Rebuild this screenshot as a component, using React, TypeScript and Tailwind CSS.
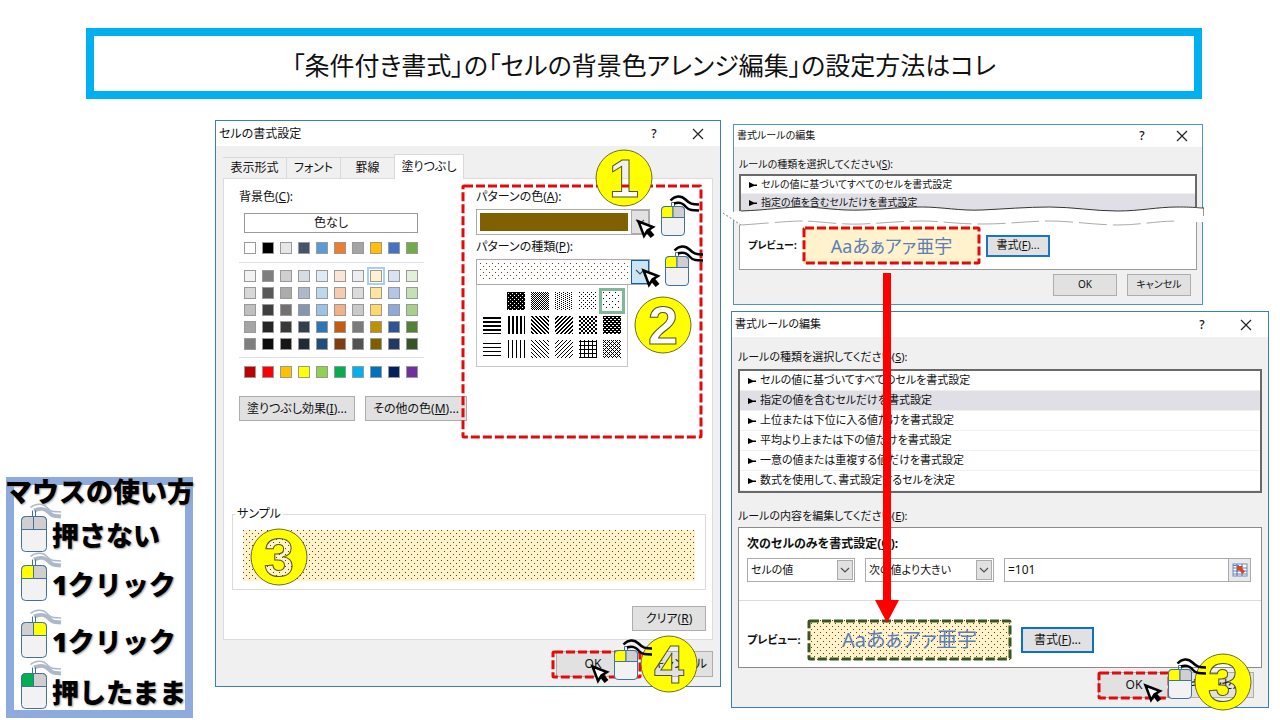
import { useId } from "react";
import type { ReactNode } from "react";

const THEME_ROW = ["#ffffff", "#000000", "#e7e6e6", "#44546a", "#5b9bd5", "#ed7d31", "#a5a5a5", "#ffc000", "#4472c4", "#70ad47"];

const TINT_ROWS = [
  ["#f2f2f2", "#7f7f7f", "#d0cece", "#d6dce4", "#deebf6", "#fbe5d5", "#ededed", "#fff2cc", "#d9e2f3", "#e2efd9"],
  ["#d8d8d8", "#595959", "#aeabab", "#adb9ca", "#bdd7ee", "#f7cbac", "#dbdbdb", "#fee599", "#b4c6e7", "#c5e0b3"],
  ["#bfbfbf", "#3f3f3f", "#757070", "#8496b0", "#9cc3e5", "#f4b183", "#c9c9c9", "#ffd965", "#8eaadb", "#a8d08d"],
  ["#a5a5a5", "#262626", "#3a3838", "#323f4f", "#2e75b5", "#c55a11", "#7b7b7b", "#bf9000", "#2f5496", "#538135"],
  ["#7f7f7f", "#0c0c0c", "#171616", "#222a35", "#1e4e79", "#833c0b", "#525252", "#7f6000", "#1f3864", "#375623"],
];

const STANDARD_ROW = ["#c00000", "#ff0000", "#ffc000", "#ffff00", "#92d050", "#00b050", "#00b0f0", "#0070c0", "#002060", "#7030a0"];

// one tile per hatch, "#" is an inked pixel
const DOTS = ["#.....", "......", "......", "...#..", "......", "......"];

const HATCHES: (string[] | null)[] = [
  null,
  ["####", "#.##", "####", "###."],
  ["#.", ".#"],
  ["#...", "..#."],
  ["#...", "....", "..#.", "...."],
  DOTS,
  ["....", "####", "####", "...."],
  [".##."],
  ["##..", ".##.", "..##", "#..#"],
  ["..##", ".##.", "##..", "#..#"],
  ["##..", "##..", "..##", "..##"],
  ["####", "#..#", "####", ".##."],
  ["....", "....", "....", "####"],
  [".#.."],
  ["#...", ".#..", "..#.", "...#"],
  ["...#", "..#.", ".#..", "#..."],
  [".#..", "####", ".#..", ".#.."],
  ["#.#.", ".#..", "#.#.", "...#"],
];

const RULES = [
  "セルの値に基づいてすべてのセルを書式設定",
  "指定の値を含むセルだけを書式設定",
  "上位または下位に入る値だけを書式設定",
  "平均より上または下の値だけを書式設定",
  "一意の値または重複する値だけを書式設定",
  "数式を使用して、書式設定するセルを決定",
];

function Hatch({ tile, ink = "#000", className }: { tile: string[]; ink?: string; className: string }) {
  const id = useId();
  return (
    <svg className={className} aria-hidden="true" shapeRendering="crispEdges">
      <defs>
        <pattern id={id} width={tile[0].length} height={tile.length} patternUnits="userSpaceOnUse">
          {tile.map((row, y) =>
            [...row].map((c, x) => (c === "#" ? <rect key={`${x}-${y}`} x={x} y={y} width="1" height="1" fill={ink} /> : null))
          )}
        </pattern>
      </defs>
      <rect width="100%" height="100%" fill={`url(#${id})`} />
    </svg>
  );
}

function DashedFrame({ color = "#e00b0b" }: { color?: string }) {
  return (
    <svg className="pointer-events-none absolute inset-px h-[calc(100%-2px)] w-[calc(100%-2px)] overflow-visible" aria-hidden="true">
      <rect width="100%" height="100%" rx="1" fill="none" stroke={color} strokeWidth="3" strokeDasharray="9 3" />
    </svg>
  );
}

// yellow disc with the digit cut out of it
function StepBadge({ n, className }: { n: number; className: string }) {
  const id = useId();
  return (
    <svg className={`pointer-events-none absolute h-[58px] w-[58px] ${className}`} viewBox="0 0 58 58" role="img" aria-label={`${n}`}>
      <defs>
        <text id={`${id}d`} x="29" y="48" textAnchor="middle" fontSize="54" fontWeight="700" fontFamily="Liberation Sans, sans-serif">
          {n}
        </text>
        <mask id={`${id}m`}>
          <rect width="58" height="58" fill="#fff" />
          <use href={`#${id}d`} fill="#000" />
        </mask>
      </defs>
      <circle cx="29" cy="29" r="28" fill="#ffff00" stroke="#6b6b2a" mask={`url(#${id}m)`} />
      <use href={`#${id}d`} fill="none" stroke="#55551e" />
    </svg>
  );
}

function ClickMouse({ className }: { className: string }) {
  return (
    <svg className={`pointer-events-none absolute h-[44px] w-[42px] ${className}`} viewBox="0 0 42 44" fill="none" aria-hidden="true">
      <path d="M11.500 12V8.500h3V12" stroke="#41719c" />
      <rect x="1.500" y="12.500" width="23" height="29" rx="3.500" fill="#f2f2f2" stroke="#41719c" />
      <path d="M1.500 23.500V16a3.500 3.500 0 0 1 3.500-3.500h8v11z" fill="#ffff00" stroke="#41719c" />
      <path d="M24.500 23.500V16a3.500 3.500 0 0 0-3.500-3.500h-8v11z" fill="#d0cece" stroke="#41719c" />
      <path d="M10.500 6.500C15 1.500 21 1 25.500 5.500s6.500 5 13.500 5" stroke="#000" strokeWidth="2.500" />
      <path d="M14 9.500c6-2 9 0 12 3.500s7 3.500 13 3.500" stroke="#000" strokeWidth="2.500" />
    </svg>
  );
}

function LegendMouse({ left = "#d0cece", right = "#d0cece" }: { left?: string; right?: string }) {
  return (
    <svg className="h-[49px] w-[42px] shrink-0" viewBox="0 0 42 49" fill="none" aria-hidden="true">
      <path d="M10.500 4.500C15 .5 23 0 27 4.500s5 4 14 4.500" stroke="#adb9ca" strokeWidth="1.500" />
      <path d="M14 7.500c7-3 11-2 15 2s6 3.500 12 4" stroke="#adb9ca" strokeWidth="4" />
      <path d="M12.500 13V7.500M15.500 13V7.500" stroke="#41719c" />
      <rect x="1.500" y="13.500" width="25" height="35" rx="4" fill="#f2f2f2" stroke="#41719c" />
      <path d="M1.500 26.500v-9a4 4 0 0 1 4-4h8v13z" fill={left} stroke="#41719c" />
      <path d="M26.500 26.500v-9a4 4 0 0 0-4-4h-9v13z" fill={right} stroke="#41719c" />
    </svg>
  );
}

function Pointer({ className }: { className: string }) {
  return (
    <svg className={`pointer-events-none absolute h-5 w-5 ${className}`} viewBox="0 0 20 20" aria-hidden="true">
      <path d="M12 12l4.500 5.500" stroke="#000" strokeWidth="5" />
      <path d="M2.500 2.500L17 8l-5.500 3.500L8 17z" fill="#fff" stroke="#000" strokeWidth="2.500" />
    </svg>
  );
}

function Chevron() {
  return (
    <svg className="h-2 w-2.5" viewBox="0 0 10 8" fill="none" stroke="#505050" strokeWidth="1.200" aria-hidden="true">
      <path d="M1 2l4 4 4-4" />
    </svg>
  );
}

function TitleBar({ title, className, buttonClass = "w-11" }: { title: string; className: string; buttonClass?: string }) {
  return (
    <div className={`flex items-center bg-white pl-[3px] ${className}`}>
      <h2 className="flex-1">{title}</h2>
      <button type="button" className={`text-center text-xs font-medium ${buttonClass}`}>?</button>
      <button type="button" aria-label="閉じる" className={`flex justify-center ${buttonClass}`}>
        <svg className="h-3 w-3" viewBox="0 0 12 12" stroke="#222" strokeWidth="1.200" aria-hidden="true">
          <path d="M1 1l10 10M11 1L1 11" />
        </svg>
      </button>
    </div>
  );
}

function PushButton({ children, className = "" }: { children: ReactNode; className?: string }) {
  return (
    <button type="button" className={`flex items-center justify-center border border-[#adadad] bg-[#e1e1e1] whitespace-nowrap ${className}`}>
      {children}
    </button>
  );
}

function Swatches({ colors, selected }: { colors: string[]; selected?: number }) {
  return (
    <div className="flex gap-1.5">
      {colors.map((c, i) => (
        <button
          key={c}
          type="button"
          aria-label={c}
          className={`h-3 w-3 border border-[#999] ${i === selected ? "outline-2 outline-offset-1 outline-[#a6d0f0]" : ""}`}
          style={{ backgroundColor: c }}
        />
      ))}
    </div>
  );
}

function PatternCombo({ label, accel, open, children }: { label: string; accel: string; open?: boolean; children: ReactNode }) {
  return (
    <div>
      <p id={`pattern-${accel}`} className="h-4 leading-4">
        {label}(<u>{accel}</u>):
      </p>
      <button
        type="button"
        aria-haspopup="listbox"
        aria-labelledby={`pattern-${accel}`}
        className="mt-1 flex h-[26px] w-[174px] border border-[#ababab] bg-white"
      >
        <span className="h-full flex-1 p-[3px]">{children}</span>
        <span className={`flex h-full w-[18px] items-center justify-center border ${open ? "border-[#0f5fa8] bg-[#cce4f7]" : "border-[#ababab] bg-[#e1e1e1]"}`}>
          <Chevron />
        </span>
      </button>
    </div>
  );
}

function FormatCells() {
  return (
    <section className="relative border border-[#3c7fb1] bg-[#f0f0f0]">
      <TitleBar title="セルの書式設定" className="h-[25px]" />

      <div className="px-[7px] pt-2 pb-2">
        <div role="tablist" className="flex items-end">
          <button role="tab" type="button" className="h-[21px] w-16 border-t border-r border-[#d9d9d9]">表示形式</button>
          <button role="tab" type="button" className="h-[21px] w-[54px] border-t border-r border-[#d9d9d9]">フォント</button>
          <button role="tab" type="button" className="h-[21px] w-[53px] border-t border-[#d9d9d9]">罫線</button>
          <button role="tab" type="button" aria-selected="true" className="relative -mb-px h-[25px] w-[70px] border border-b-0 border-[#d9d9d9] bg-white">塗りつぶし</button>
        </div>

        <div className="border border-[#dcdcdc] bg-white pt-1.5 pr-1.5 pb-2 pl-2">
          <div className="flex h-[253px]">
            <div className="min-w-0 flex-1 pt-1 pl-[7px]">
              <p className="h-4 leading-4">背景色(<u>C</u>):</p>
              <button type="button" className="mt-2 ml-[5px] block h-5 w-[174px] border border-[#999] bg-white">色なし</button>
              <div className="mt-[9px] w-[185px]">
                <div className="pl-[5px]"><Swatches colors={THEME_ROW} /></div>
                <div className="mt-2 flex flex-col gap-[5px] border-y border-[#dcdfe3] py-[7px] pl-[5px]">
                  {TINT_ROWS.map((row, i) => (
                    <Swatches key={row[0]} colors={row} selected={i === 0 ? 7 : undefined} />
                  ))}
                </div>
                <div className="mt-2 pl-[5px]"><Swatches colors={STANDARD_ROW} /></div>
              </div>
              <div className="mt-[18px] flex gap-2.5">
                <PushButton className="h-[25px] w-[116px] shrink-0">塗りつぶし効果(<u>I</u>)...</PushButton>
                <PushButton className="h-[25px] w-[102px] shrink-0">その他の色(<u>M</u>)...</PushButton>
              </div>
            </div>

            <div className="relative mr-1 w-[240px] shrink-0 px-3.5 pt-1">
              <PatternCombo label="パターンの色" accel="A">
                <span className="block h-full bg-[#806000]" />
              </PatternCombo>
              <div className="mt-1">
                <PatternCombo label="パターンの種類" accel="P" open>
                  <Hatch tile={DOTS} ink="#5f4a10" className="block h-full w-full" />
                </PatternCombo>
              </div>
              <div role="listbox" className="grid w-[152px] grid-cols-6 gap-1.5 border border-t-0 border-[#c6c6c6] bg-white px-1.5 pt-[7px] pb-2">
                {HATCHES.map((tile, i) => (
                  <span key={i} role="option" aria-selected={i === 5} className={`block h-[18px] w-[18px] ${i === 5 ? "outline-3 outline-offset-1 outline-[#7fb79a]" : ""}`}>
                    {tile && <Hatch tile={tile} className="block h-full w-full" />}
                  </span>
                ))}
              </div>
              <DashedFrame />
            </div>
          </div>

          <fieldset className="mt-[68px] h-[84px] border border-[#d9dcdc] px-2.5 pt-2">
            <legend className="-ml-2 h-4 px-0.5 leading-4">サンプル</legend>
            <Hatch tile={DOTS} ink="#5f4700" className="block h-[51px] w-full bg-[#fff2cc]" />
          </fieldset>
          <div className="mt-4 flex justify-end">
            <PushButton className="h-[25px] w-[74px]">クリア(<u>R</u>)</PushButton>
          </div>
        </div>

        <div className="mt-[11px] flex justify-end gap-1.5">
          <div className="relative h-[27px] w-[89px] pl-1">
            <PushButton className="h-[26px] w-[74px]">OK</PushButton>
            <DashedFrame />
          </div>
          <PushButton className="h-[26px] w-[66px]">キャンセル</PushButton>
        </div>
      </div>

      <StepBadge n={1} className="top-7 right-[67px]" />
      <StepBadge n={2} className="top-[175px] right-7" />
      <StepBadge n={3} className="top-[407px] left-[34px]" />
      <StepBadge n={4} className="top-[514px] right-[22px]" />
      <ClickMouse className="top-[73px] right-[18px]" />
      <ClickMouse className="top-[123px] right-[14px]" />
      <ClickMouse className="top-[517px] right-[65px]" />
      <Pointer className="top-[98px] right-16" />
      <Pointer className="top-[147px] right-[59px]" />
      <Pointer className="top-[543px] right-[110px]" />
    </section>
  );
}

function RuleList({ rules, rowClass }: { rules: string[]; rowClass: string }) {
  return (
    <ul role="listbox" className="border-2 border-[#696969] bg-white">
      {rules.map((r, i) => (
        <li key={r} role="option" aria-selected={i === 1} className={`flex items-center gap-1 border-b border-[#f0f0f0] pl-2 ${rowClass} ${i === 1 ? "bg-[#e0dfe5]" : ""}`}>
          <svg className="h-2 w-2" viewBox="0 0 8 8" aria-hidden="true">
            <path d="M0 1l5 2.500h3v1.500H5L0 7z" fill="#000" />
          </svg>
          {r}
        </li>
      ))}
    </ul>
  );
}

function TornEdge() {
  return (
    <svg className="absolute top-[81px] -right-0.5 -left-[11px] h-5 w-[calc(100%+13px)]" viewBox="0 0 483 20" preserveAspectRatio="none" fill="none" aria-hidden="true">
      <path
        d="M0 7L18 5C45 4 62 1 80 1s35 4 60 3 40-3 60-3 38 4 60 3 45-3 68-3 45 4 68 4 40-4 60-4 20 1 27 1v14c-8 0-16 0-27 0-20 0-38 4-60 4s-45-4-68-4-40 4-68 4-40-3-60-3-38 3-60 2-45-3-60-3-45 3-62 4z"
        fill="#fff"
      />
      <path d="M18 5C45 4 62 1 80 1s35 4 60 3 40-3 60-3 38 4 60 3 45-3 68-3 45 4 68 4 40-4 60-4 20 1 27 1v8" stroke="#333" strokeWidth="1" />
      <path d="M0 7l18 12" stroke="#777" strokeDasharray="2 2" />
      <path d="M18 19c17-1 47-4 62-4s38 4 60 3 40-3 60-3 32 3 60 3 46-3 68-3 46 4 68 4 40-4 60-4" stroke="#aaa" strokeWidth="1" strokeDasharray="28 6" />
    </svg>
  );
}

function RuleEditorBefore() {
  return (
    <section className="relative mt-1 mr-[66px] ml-0.5 border border-[#4f93c4] bg-[#f0f0f0] text-[10px]">
      <TitleBar title="書式ルールの編集" className="h-[22px]" buttonClass="w-10" />
      <div className="px-[5px] pb-2">
        <p className="pt-2 leading-[19px]">ルールの種類を選択してください(<u>S</u>):</p>
        <RuleList rules={RULES.slice(0, 2)} rowClass="h-[18px]" />
        <div className="flex h-14 items-center border border-t-0 border-[#999] bg-white pt-2 pl-2">
          <span className="w-[55px] font-bold whitespace-nowrap">プレビュー:</span>
          <div className="relative flex h-[37px] w-[177px] items-center justify-center bg-[#fff2cc] text-lg text-[#5b7fb5]">
            Aaあぁアァ亜宇
            <DashedFrame />
          </div>
          <button type="button" className="ml-1.5 h-[22px] w-16 border-2 border-[#1a74c8] bg-[#e1e1e1] text-[11px] whitespace-nowrap">書式(<u>F</u>)...</button>
        </div>
        <div className="mt-1 flex justify-end gap-2.5 pr-1.5">
          <PushButton className="h-[22px] w-16">OK</PushButton>
          <PushButton className="h-[22px] w-16">キャンセル</PushButton>
        </div>
      </div>
      <TornEdge />
    </section>
  );
}

function ArrowSelect({ label, value, className }: { label: string; value: string; className: string }) {
  return (
    <div className={`relative h-6 ${className}`}>
      <select aria-label={label} className="h-full w-full appearance-none border border-[#ababab] bg-white pl-[3px]">
        <option>{value}</option>
      </select>
      <span className="pointer-events-none absolute top-0.5 right-0.5 bottom-0.5 flex w-4 items-center justify-center border border-[#ababab] bg-[#e1e1e1]">
        <Chevron />
      </span>
    </div>
  );
}

function RuleEditorAfter() {
  return (
    <section className="relative mt-1.5 border border-[#3c7fb1] bg-[#f0f0f0] text-[11px]">
      <TitleBar title="書式ルールの編集" className="h-[25px]" />
      <div className="px-1.5 pb-2">
        <p className="pt-2 leading-6">ルールの種類を選択してください(<u>S</u>):</p>
        <RuleList rules={RULES} rowClass="h-5" />
        <p className="pt-3 leading-[22px]">ルールの内容を編集してください(<u>E</u>):</p>

        <div className="border border-[#8a8a8a] bg-white">
          <p className="px-2 pt-2 text-xs font-bold">次のセルのみを書式設定(<u>O</u>):</p>
          <div className="mt-1.5 flex gap-2.5 pr-2.5 pl-2">
            <ArrowSelect label="対象" value="セルの値" className="w-[108px]" />
            <ArrowSelect label="条件" value="次の値より大きい" className="w-[129px]" />
            <div className="flex h-6 flex-1 border border-[#ababab]">
              <input aria-label="値" defaultValue="=101" className="min-w-0 flex-1 bg-white pl-[3px] text-xs" />
              <button type="button" aria-label="範囲の選択" className="flex w-[22px] items-center justify-center border-l border-[#ababab] bg-[#e9e9e9]">
                <svg className="h-4 w-4" viewBox="0 0 16 16" aria-hidden="true">
                  <rect x="1" y="2" width="14" height="12" fill="#fff" stroke="#6c8ebf" />
                  <path d="M1 3.500h6M1 6h14M1 9h14M1 12h14M5 2v12M10 2v12" stroke="#5b84bd" strokeWidth="1.200" />
                  <path d="M5 4h6L9.500 5.500l3.500 4-2.500 2.500-3.500-4L5 10z" fill="#d9442b" />
                </svg>
              </button>
            </div>
          </div>
          <div className="mt-[18px] flex h-[67px] items-center border-t border-[#dcdcdc] pt-3 pl-2">
            <span className="w-[61px] font-bold whitespace-nowrap">プレビュー:</span>
            <div className="relative h-10 w-[203px]">
              <Hatch tile={DOTS} ink="#5f4700" className="absolute inset-0 h-full w-full bg-[#fff2cc]" />
              <span className="relative flex h-full items-center justify-center text-xl text-[#5b7fb5]">Aaあぁアァ亜宇</span>
              <DashedFrame color="#375623" />
            </div>
            <button type="button" className="ml-2.5 h-[26px] w-[73px] border-2 border-[#0f70c8] bg-[#e1e1e1] text-xs whitespace-nowrap">書式(<u>F</u>)...</button>
          </div>
        </div>

        <div className="mt-1 flex justify-end gap-2.5 pr-2 text-xs">
          <div className="relative h-[27px] w-[72px]">
            <PushButton className="h-[26px] w-full">OK</PushButton>
            <DashedFrame />
          </div>
          <PushButton className="h-[26px] w-[74px]">キャンセル</PushButton>
        </div>
      </div>

      <StepBadge n={3} className="top-[341px] right-[16px]" />
      <ClickMouse className="top-[345px] right-[59px]" />
      <Pointer className="top-[371px] right-[105px]" />
    </section>
  );
}

function LegendRow({ text, className = "", left, right }: { text: string; className?: string; left?: string; right?: string }) {
  return (
    <li className={`flex h-[49px] items-center pl-1.5 ${className}`}>
      <LegendMouse left={left} right={right} />
      <span className="-ml-2.5 pt-4 leading-8 whitespace-nowrap">{text}</span>
    </li>
  );
}

function MouseLegend() {
  return (
    <aside className="mt-[357px] mr-3 h-[241px] border-8 border-[#8faadc] bg-white text-[27px] font-black text-black [text-shadow:1px_1px_2px_#999]">
      <h2 className="-mx-3 -mt-2 flex h-[26px] items-center justify-center pt-1 whitespace-nowrap">マウスの使い方</h2>
      <ul>
        <LegendRow text="押さない" />
        <LegendRow text="1クリック" left="#ffff00" />
        <LegendRow text="1クリック" right="#ffff00" className="mt-2" />
        <LegendRow text="押したまま" left="#00b050" className="mt-0.5" />
      </ul>
    </aside>
  );
}

export default function App() {
  return (
    <main lang="ja" className="min-h-screen bg-white pt-7 font-['Noto_Sans','Noto_Sans_CJK_JP',sans-serif] text-xs text-[#111]">
      <h1 className="mr-[78px] ml-[86px] flex h-[71px] items-center justify-center border-8 border-[#00b0f0] pt-1 text-[25px] [font-feature-settings:'palt']">
        「条件付き書式」の「セルの背景色アレンジ編集」の設定方法はコレ
      </h1>

      <div className="mt-[21px] grid grid-cols-[199px_minmax(0,506fr)_minmax(0,538fr)] items-start gap-2.5 pr-[11px] pl-1.5">
        <MouseLegend />
        <div className="[font-feature-settings:'palt']">
          <FormatCells />
        </div>
        <div className="relative [font-feature-settings:'palt']">
          <RuleEditorBefore />
          <RuleEditorAfter />
          <svg className="absolute top-[153px] left-[144px] h-[350px] w-6" viewBox="0 0 24 350" aria-hidden="true">
            <path d="M8 0h8v327h8L12 350 0 327h8z" fill="#ff0000" />
          </svg>
        </div>
      </div>
    </main>
  );
}
